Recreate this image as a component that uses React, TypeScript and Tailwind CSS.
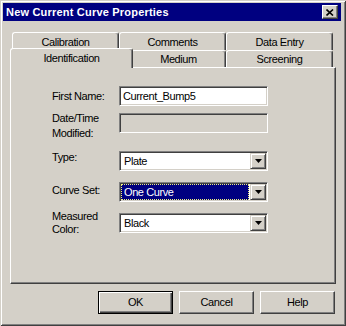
import React from 'react';

const raised =
  'border-t border-l border-t-white border-l-white border-r border-b border-r-[#404040] border-b-[#404040] shadow-[inset_-1px_-1px_#808080]';
const sunken =
  'border-t border-l border-t-[#808080] border-l-[#808080] border-r border-b border-r-white border-b-white shadow-[inset_1px_1px_#404040,inset_-1px_-1px_#d4d0c8]';

function Tab({ label, width, selected = false }: { label: string; width: string; selected?: boolean }) {
  if (selected) {
    return (
      <div
        className={`relative z-10 -mx-[2px] -mt-[2px] h-[20px] shrink-0 ${width} bg-[#d4d0c8] border-t border-l border-t-white border-l-white border-r border-r-[#404040] shadow-[inset_-1px_0_#808080] rounded-t-[3px] flex items-center justify-center`}
      >
        {label}
      </div>
    );
  }
  return (
    <div
      className={`h-full shrink-0 ${width} bg-[#d4d0c8] border-t border-l border-t-white border-l-white border-r border-r-[#404040] shadow-[inset_-1px_0_#808080] rounded-t-[3px] flex items-center justify-center pt-[1px]`}
    >
      {label}
    </div>
  );
}

function DropButton() {
  return (
    <div className="w-[16px] h-full shrink-0 bg-[#d4d0c8] border-t border-l border-t-[#d4d0c8] border-l-[#d4d0c8] border-r border-b border-r-[#404040] border-b-[#404040] shadow-[inset_1px_1px_white,inset_-1px_-1px_#808080] flex items-center justify-center">
      <svg width="7" height="4" viewBox="0 0 7 4">
        <polygon points="0,0 7,0 3.5,4" fill="#000" />
      </svg>
    </div>
  );
}

function Select({ value, focused = false }: { value: string; focused?: boolean }) {
  return (
    <div className={`w-[149px] h-[20px] bg-white ${sunken} flex p-[1px]`}>
      {focused ? (
        <div className="flex-1 bg-[#000080] text-white border border-dotted border-[#f0f080] flex items-center pl-[2px] mr-[1px]">
          {value}
        </div>
      ) : (
        <div className="flex-1 flex items-center pl-[3px]">{value}</div>
      )}
      <DropButton />
    </div>
  );
}

function Button({ label, isDefault = false }: { label: string; isDefault?: boolean }) {
  return (
    <div
      className={
        isDefault
          ? 'w-[75px] h-[23px] bg-[#d4d0c8] border border-black shadow-[inset_1px_1px_white,inset_-1px_-1px_#404040,inset_-2px_-2px_#808080] flex items-center justify-center'
          : `w-[75px] h-[23px] bg-[#d4d0c8] ${raised} flex items-center justify-center`
      }
    >
      {label}
    </div>
  );
}

export default function App() {
  return (
    <div className="w-[346px] h-[326px] bg-[#d4d0c8] shadow-[inset_1px_1px_#d4d0c8,inset_-1px_-1px_#404040,inset_2px_2px_white,inset_-2px_-2px_#808080] pt-[3px] px-[3px] font-['Liberation_Sans',Arial,sans-serif] text-[11px] tracking-[-0.4px] text-black select-none">
      {/* Title bar */}
      <div className="w-[338px] h-[18px] bg-[#000080] flex items-center justify-between pl-[3px] pr-[3px]">
        <span className="text-white font-bold tracking-[0.2px] leading-none">New Current Curve Properties</span>
        <div className={`w-[16px] h-[14px] bg-[#d4d0c8] ${raised} flex items-center justify-center`}>
          <svg width="8" height="7" viewBox="0 0 8 7">
            <path d="M0.5 0.5 L7 6.5 M7 0.5 L0.5 6.5" stroke="#000" strokeWidth="1.6" fill="none" />
          </svg>
        </div>
      </div>

      {/* Tab control */}
      <div className="ml-[7px] w-[326px]">
        <div className="mt-[11px] h-[18px] flex pl-[2px]">
          <Tab label="Calibration" width="w-[107px]" />
          <Tab label="Comments" width="w-[107px]" />
          <Tab label="Data Entry" width="w-[107px]" />
        </div>
        <div className="h-[17px] flex pl-[2px]">
          <Tab label="Identification" width="w-[123px]" selected />
          <Tab label="Medium" width="w-[95px]" />
          <Tab label="Screening" width="w-[107px]" />
        </div>

        {/* Panel */}
        <div className="h-[217px] border-t border-l border-t-white border-l-white border-r border-b border-r-[#404040] border-b-[#404040] shadow-[inset_-1px_-1px_#808080] pt-[18px] pl-[41px] flex flex-col">
          <div className="flex">
            <div className="w-[67px] pt-[3px] leading-[14px]">First Name:</div>
            <div className={`w-[149px] h-[20px] bg-white ${sunken} flex items-center pl-[3px]`}>Current_Bump5</div>
          </div>

          <div className="flex mt-[7px]">
            <div className="w-[67px] -mt-[2px] leading-[15px]">
              Date/Time
              <br />
              Modified:
            </div>
            <div className={`w-[149px] h-[20px] bg-[#d4d0c8] ${sunken}`} />
          </div>

          <div className="flex mt-[10px]">
            <div className="w-[67px] -mt-[1px] leading-[14px]">Type:</div>
            <Select value="Plate" />
          </div>

          <div className="flex mt-[11px]">
            <div className="w-[67px] pt-[1px] leading-[14px]">Curve Set:</div>
            <Select value="One Curve" focused />
          </div>

          <div className="flex mt-[11px]">
            <div className="w-[67px] -mt-[3px] leading-[13px]">
              Measured
              <br />
              Color:
            </div>
            <Select value="Black" />
          </div>
        </div>

        {/* Buttons */}
        <div className="mt-[7px] flex justify-end gap-[6px] pr-[1px]">
          <Button label="OK" isDefault />
          <Button label="Cancel" />
          <Button label="Help" />
        </div>
      </div>
    </div>
  );
}
